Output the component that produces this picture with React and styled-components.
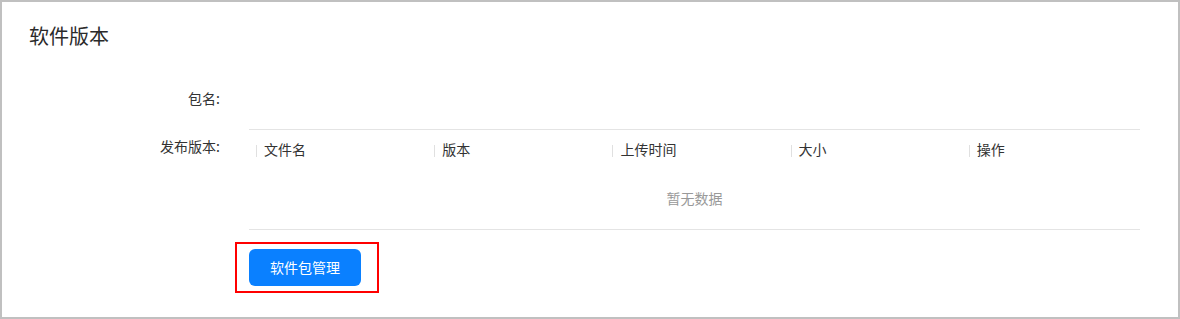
import React from 'react';
import styled, { createGlobalStyle } from 'styled-components';

const GlobalStyle = createGlobalStyle`
  html, body {
    margin: 0;
    padding: 0;
    background: #ffffff;
  }
  body {
    font-family: "Noto Sans CJK SC", "Noto Sans", "Liberation Sans", sans-serif;
    color: #333333;
  }
`;

// Outer card with the grey frame
const Card = styled.div`
  box-sizing: border-box;
  width: 1180px;
  height: 319px;
  border: 2px solid #c0c0c0;
  background: #ffffff;
  padding: 20px 38px 0 0;
`;

const Title = styled.h2`
  margin: 0 0 0 27px;
  font-size: 20px;
  line-height: 28px;
  font-weight: 400;
  color: #2a2a2a;
`;

const Form = styled.div`
  margin-top: 38px;
  display: flex;
  flex-direction: column;
`;

const Row = styled.div`
  display: flex;
  align-items: flex-start;
  margin-top: ${(p) => p.gap || 0}px;
`;

const Label = styled.div`
  flex: 0 0 218px;
  text-align: right;
  font-size: 14px;
  line-height: 20px;
  padding-top: ${(p) => p.offset || 0}px;
  margin-right: 29px;
  color: #333333;
`;

const Field = styled.div`
  flex: 1;
  min-width: 0;
`;

const Table = styled.div`
  border-top: 1px solid #e4e4e4;
  border-bottom: 1px solid #e4e4e4;
`;

const HeadRow = styled.div`
  display: grid;
  grid-template-columns: repeat(5, 1fr);
  height: 40px;
`;

const HeadCell = styled.div`
  position: relative;
  padding-left: 15px;
  font-size: 14px;
  line-height: 38px;
  color: #333333;

  &::before {
    content: '';
    position: absolute;
    left: 7px;
    top: 15px;
    width: 1px;
    height: 12px;
    background: #e0e0e0;
  }
`;

const Empty = styled.div`
  box-sizing: border-box;
  height: 59px;
  padding-bottom: 3px;
  display: flex;
  align-items: center;
  justify-content: center;
  font-size: 14px;
  color: #999999;
`;

// Red annotation frame around the button
const Highlight = styled.div`
  display: inline-block;
  margin: 12px 0 0 -14px;
  border: 2px solid #ff0000;
  padding: 5px 16px 5px 12px;
`;

const Button = styled.button`
  display: block;
  width: 112px;
  height: 37px;
  padding: 0 0 2px;
  border: none;
  border-radius: 6px;
  background: #0a80ff;
  color: #ffffff;
  font-family: inherit;
  font-size: 14px;
  cursor: pointer;
`;

const columns = ['文件名', '版本', '上传时间', '大小', '操作'];

export default function App() {
  return (
    <>
      <GlobalStyle />
      <Card>
        <Title>软件版本</Title>
        <Form>
          <Row>
            <Label>包名:</Label>
            <Field />
          </Row>
          <Row gap={21}>
            <Label offset={7}>发布版本:</Label>
            <Field>
              <Table>
                <HeadRow>
                  {columns.map((c) => (
                    <HeadCell key={c}>{c}</HeadCell>
                  ))}
                </HeadRow>
                <Empty>暂无数据</Empty>
              </Table>
              <Highlight>
                <Button>软件包管理</Button>
              </Highlight>
            </Field>
          </Row>
        </Form>
      </Card>
    </>
  );
}
